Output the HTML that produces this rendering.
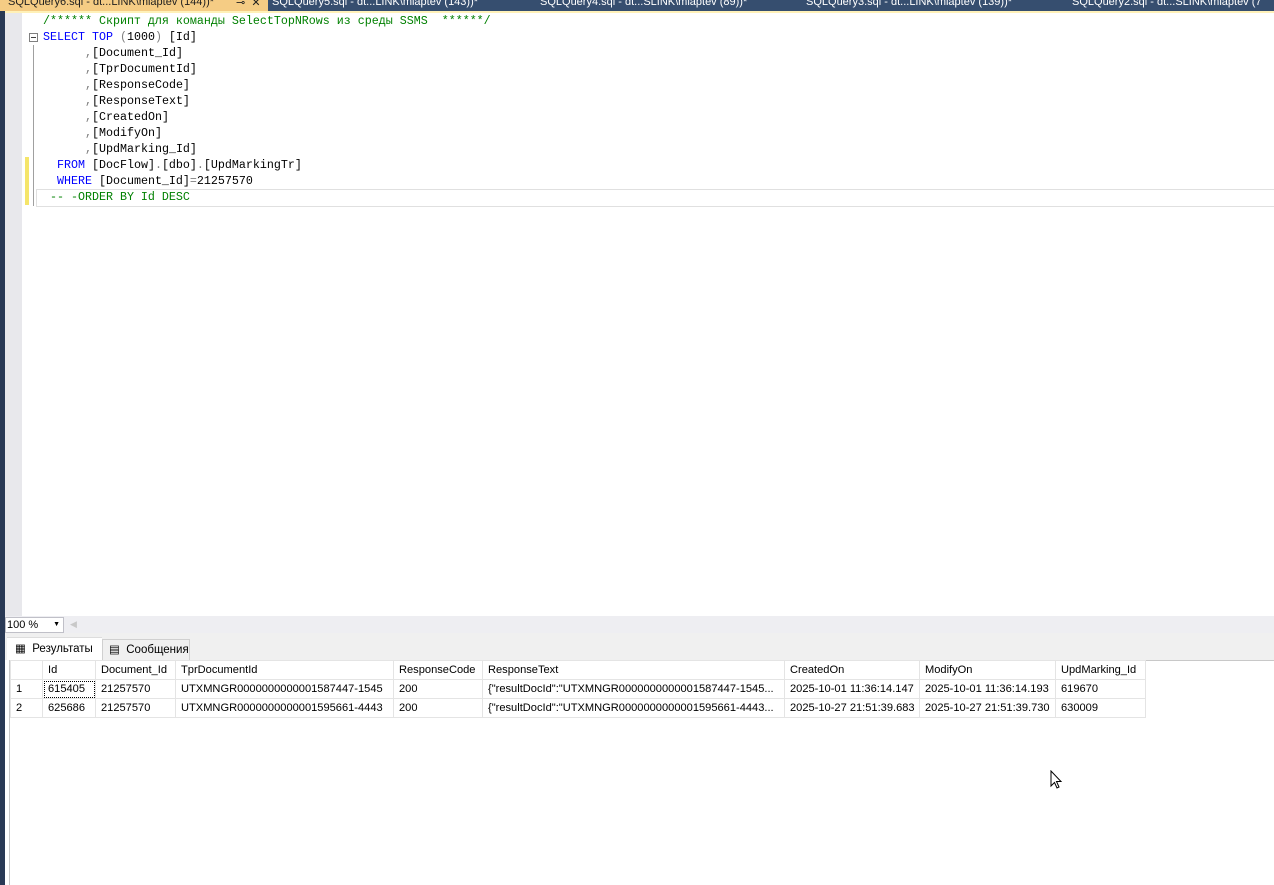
<!DOCTYPE html>
<html><head><meta charset="utf-8"><style>
*{margin:0;padding:0;box-sizing:border-box}
body{width:1274px;height:885px;overflow:hidden;background:#fff;position:relative;font-family:"Liberation Sans",sans-serif}
.abs{position:absolute}
.tabs{left:0;top:0;width:1274px;height:11px;background:#364e6f;overflow:hidden}
.tab{position:absolute;top:-4px;font-size:11px;color:#fff;white-space:nowrap}
.code{left:0;top:13px;font-family:"Liberation Mono","DejaVu Sans Mono",monospace;font-size:11.67px;line-height:16px;white-space:pre}
.ln{position:absolute;height:16px}
.k{color:#0000ff}.g{color:#008000}.p{color:#808080}.d{color:#000}
table{border-collapse:collapse;font-size:11.1px;table-layout:fixed;width:1135px}
td{border:1px solid #e4e4e4;height:19px;padding:0 5px;white-space:nowrap;overflow:hidden;color:#000}
</style></head><body>
<div class="abs tabs">
 <div class="abs" style="left:0;top:0;width:268px;height:11px;background:#f5cc84"></div>
 <div class="tab" style="left:8px;color:#1e1e1e">SQLQuery6.sql - dt...LINK\mlaptev (144))*</div>
 <div class="tab" style="left:236px;color:#1e1e1e">⊸&nbsp;&nbsp;✕</div>
 <div class="tab" style="left:272px">SQLQuery5.sql - dt...LINK\mlaptev (143))*</div>
 <div class="tab" style="left:540px">SQLQuery4.sql - dt...SLINK\mlaptev (89))*</div>
 <div class="tab" style="left:806px">SQLQuery3.sql - dt...LINK\mlaptev (139))*</div>
 <div class="tab" style="left:1072px">SQLQuery2.sql - dt...SLINK\mlaptev (7</div>
</div>
<div class="abs" style="left:0;top:11px;width:1274px;height:2px;background:#fff1b8"></div>
<div class="abs" style="left:0;top:11px;width:5px;height:874px;background:#293955"></div>
<div class="abs" style="left:5px;top:13px;width:17px;height:603px;background:#e8e8ec"></div>
<div class="abs" style="left:25px;top:157px;width:4px;height:48px;background:#f5e56a"></div>
<div class="abs" style="left:33px;top:45px;width:1px;height:161px;background:#a0a0a0"></div>
<div class="abs" style="left:29px;top:33px;width:9px;height:9px;border:1px solid #808080;background:#fff"></div>
<div class="abs" style="left:31px;top:37px;width:5px;height:1px;background:#404040"></div>
<div class="abs" style="left:36px;top:189px;width:1238px;height:18px;border:1px solid #e0e0e0;border-right:none"></div>
<div class="abs code" style="width:1274px">
<div class="ln" style="left:43px;top:0"><span class="g">/****** Скрипт для команды SelectTopNRows из среды SSMS  ******/</span></div>
<div class="ln" style="left:43px;top:16px"><span class="k">SELECT TOP</span> <span class="p">(</span>1000<span class="p">)</span> [Id]</div>
<div class="ln" style="left:85px;top:32px"><span class="p">,</span>[Document_Id]</div>
<div class="ln" style="left:85px;top:48px"><span class="p">,</span>[TprDocumentId]</div>
<div class="ln" style="left:85px;top:64px"><span class="p">,</span>[ResponseCode]</div>
<div class="ln" style="left:85px;top:80px"><span class="p">,</span>[ResponseText]</div>
<div class="ln" style="left:85px;top:96px"><span class="p">,</span>[CreatedOn]</div>
<div class="ln" style="left:85px;top:112px"><span class="p">,</span>[ModifyOn]</div>
<div class="ln" style="left:85px;top:128px"><span class="p">,</span>[UpdMarking_Id]</div>
<div class="ln" style="left:57px;top:144px"><span class="k">FROM</span> [DocFlow]<span class="p">.</span>[dbo]<span class="p">.</span>[UpdMarkingTr]</div>
<div class="ln" style="left:57px;top:160px"><span class="k">WHERE</span> [Document_Id]<span class="p">=</span>21257570</div>
<div class="ln" style="left:50px;top:176px"><span class="g">-- -ORDER BY Id DESC</span></div>
</div>
<div class="abs" style="left:5px;top:616px;width:1269px;height:17px;background:#eeeef2"></div>
<div class="abs" style="left:5px;top:617px;width:59px;height:16px;background:#fff;border:1px solid #c0c0c8;font-size:11px;padding-left:1px;line-height:14px">100 %<span style="position:absolute;right:3px;top:0;font-size:7px">▼</span></div>
<div class="abs" style="left:70px;top:619px;font-size:9px;color:#c8c8c8">◀</div>
<div class="abs" style="left:5px;top:633px;width:1269px;height:252px;background:#fff"></div>
<div class="abs" style="left:5px;top:633px;width:1269px;height:27px;background:#f0f0f0"></div>
<div class="abs" style="left:7px;top:637px;width:95px;height:24px;background:#fff;font-size:11.5px;line-height:22px;padding-left:8px;border-top:1px solid #ddd">▦&nbsp; Результаты</div>
<div class="abs" style="left:102px;top:639px;width:88px;height:21px;background:#f0f0f0;border:1px solid #d0d0d0;border-bottom:none;font-size:11.5px;line-height:20px;padding-left:6px">▤&nbsp; Сообщения</div>
<div class="abs" style="left:9px;top:660px;width:1265px;height:225px;border-left:1px solid #c8c8c8;border-top:1px solid #c8c8c8"></div>
<table class="abs" style="left:10px;top:660px">
<colgroup><col style="width:32px"><col style="width:53px"><col style="width:80px"><col style="width:218px"><col style="width:89px"><col style="width:302px"><col style="width:135px"><col style="width:136px"><col style="width:90px"></colgroup>
<tr><td></td><td>Id</td><td>Document_Id</td><td>TprDocumentId</td><td>ResponseCode</td><td>ResponseText</td><td>CreatedOn</td><td>ModifyOn</td><td>UpdMarking_Id</td></tr>
<tr><td>1</td><td style="outline:1px dotted #000;outline-offset:-2px">615405</td><td>21257570</td><td>UTXMNGR0000000000001587447-1545</td><td>200</td><td>{"resultDocId":"UTXMNGR0000000000001587447-1545...</td><td>2025-10-01 11:36:14.147</td><td>2025-10-01 11:36:14.193</td><td>619670</td></tr>
<tr><td>2</td><td>625686</td><td>21257570</td><td>UTXMNGR0000000000001595661-4443</td><td>200</td><td>{"resultDocId":"UTXMNGR0000000000001595661-4443...</td><td>2025-10-27 21:51:39.683</td><td>2025-10-27 21:51:39.730</td><td>630009</td></tr>
</table>
<svg class="abs" style="left:1050px;top:770px" width="13" height="20"><path d="M1 1 L1 16 L4.5 12.5 L7 18 L9 17 L6.5 11.5 L11 11.5 Z" fill="#fff" stroke="#000" stroke-width="1"/></svg>
</body></html>
